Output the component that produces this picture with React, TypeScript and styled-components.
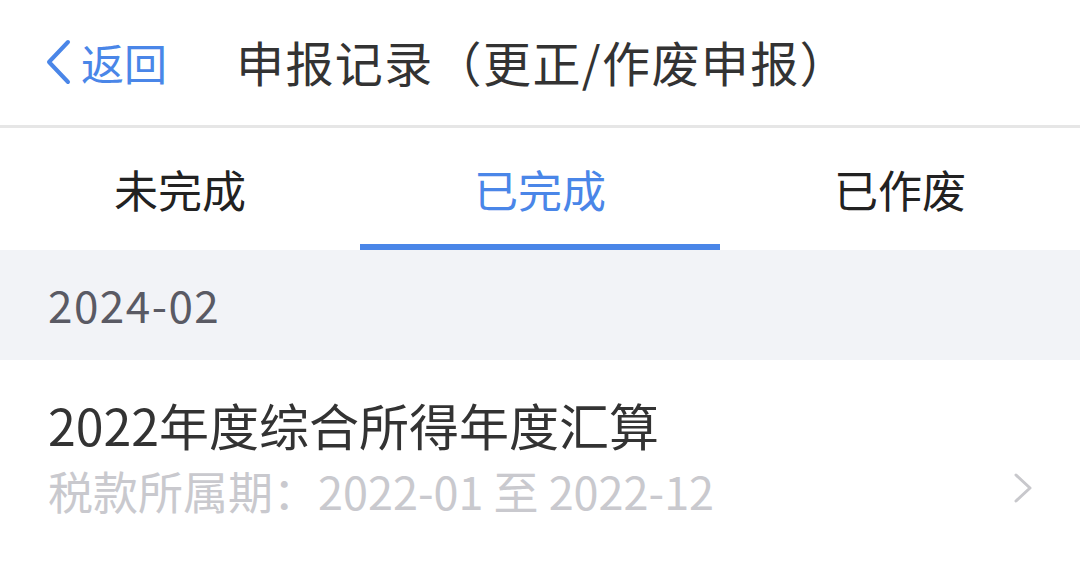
import React, { useState } from "react";
import styled, { createGlobalStyle } from "styled-components";

const GlobalStyle = createGlobalStyle`
  html, body {
    margin: 0;
    padding: 0;
    background: #ffffff;
  }
  body {
    font-family: "Noto Sans CJK SC", "Noto Sans", sans-serif;
  }
`;

const Page = styled.div`
  width: 1080px;
  height: 575px;
  overflow: hidden;
  background: #fff;
`;

const NavBar = styled.div`
  height: 128px;
  display: flex;
  align-items: center;
  border-bottom: 3px solid #e6e6e6;
  box-sizing: border-box;
  padding-left: 44px;
`;

const BackButton = styled.div`
  display: flex;
  align-items: center;
  gap: 9px;
  color: #4a86e8;
  font-size: 43px;
  width: 192px;
  margin-top: -2px;
`;

const Title = styled.div`
  font-size: 48px;
  color: #333;
  letter-spacing: 1.4px;
  margin-top: -4px;
`;

const Tabs = styled.div`
  display: grid;
  grid-template-columns: repeat(3, 1fr);
  height: 122px;
`;

const Tab = styled.div<{ $active?: boolean }>`
  display: flex;
  align-items: center;
  justify-content: center;
  font-size: 44px;
  color: ${(p) => (p.$active ? "#4a86e8" : "#222")};
  border-bottom: 6px solid ${(p) => (p.$active ? "#4a86e8" : "transparent")};
  padding-top: 6px;
  box-sizing: border-box;
  cursor: pointer;
`;

const SectionHeader = styled.div`
  height: 110px;
  background: #f2f3f7;
  display: flex;
  align-items: center;
  padding-left: 48px;
  font-size: 44px;
  letter-spacing: 1.5px;
  color: #5a5a64;
  box-sizing: border-box;
  padding-bottom: 2px;
`;

const Item = styled.div`
  display: flex;
  align-items: center;
  padding: 34px 46px 0 48px;
`;

const ItemBody = styled.div`
  flex: 1;
  display: flex;
  flex-direction: column;
`;

const ItemTitle = styled.div`
  font-size: 50px;
  color: #333;
  line-height: 60px;
`;

const ItemSub = styled.div`
  font-size: 45px;
  color: #c9c9ce;
  line-height: 58px;
  margin-top: 8px;
`;

const Arrow = styled.div`
  margin-top: 62px;
  display: flex;
`;

const tabs = ["未完成", "已完成", "已作废"];

export default function App() {
  const [active, setActive] = useState(1);
  return (
    <Page>
      <GlobalStyle />
      <NavBar>
        <BackButton>
          <svg width="28" height="46" viewBox="0 0 28 46">
            <path d="M24 3 L5 23 L24 43" fill="none" stroke="#4a86e8" strokeWidth="4" strokeLinecap="round" strokeLinejoin="round" />
          </svg>
          <span>返回</span>
        </BackButton>
        <Title>申报记录（更正/作废申报）</Title>
      </NavBar>
      <Tabs>
        {tabs.map((t, i) => (
          <Tab key={t} $active={i === active} onClick={() => setActive(i)}>
            {t}
          </Tab>
        ))}
      </Tabs>
      <SectionHeader>2024-02</SectionHeader>
      <Item>
        <ItemBody>
          <ItemTitle>2022年度综合所得年度汇算</ItemTitle>
          <ItemSub>税款所属期：2022-01 至 2022-12</ItemSub>
        </ItemBody>
        <Arrow>
          <svg width="22" height="32" viewBox="0 0 22 32">
            <path d="M4 3 L18 16 L4 29" fill="none" stroke="#c8c8cc" strokeWidth="3" strokeLinecap="round" strokeLinejoin="round" />
          </svg>
        </Arrow>
      </Item>
    </Page>
  );
}
